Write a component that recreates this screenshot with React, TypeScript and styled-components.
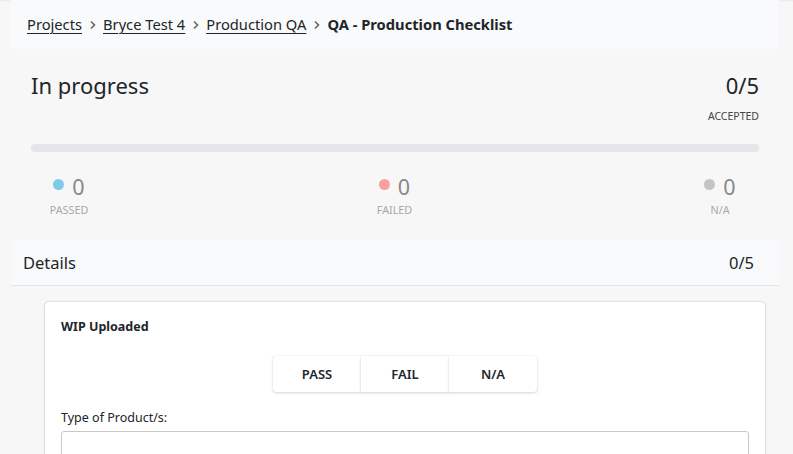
import React from "react";
import styled, { createGlobalStyle } from "styled-components";

const Global = createGlobalStyle`
  html, body { margin: 0; padding: 0; background: #f7f7f7; }
  body { font-family: "Noto Sans", "Open Sans", sans-serif; color: #212529; }
  * { box-sizing: border-box; }
`;

const Page = styled.div`
  width: 793px;
  height: 454px;
  overflow: hidden;
  background: #f7f7f7;
  position: relative;
  box-shadow: inset 0 2px 2px -1px rgba(0,0,0,0.06);
`;

const CrumbBar = styled.nav`
  margin: 0 14px 0 10px;
  height: 49px;
  background: #f9fafb;
  display: flex;
  align-items: center;
  padding: 0 0 1px 17px;
  gap: 6.5px;
  font-size: 14.7px;
`;

const CrumbLink = styled.a`
  color: #212529;
  text-decoration: underline;
  text-underline-offset: 3px;
`;

const CrumbCurrent = styled.span`
  font-weight: 700;
`;

const Chevron = () => (
  <svg width="8" height="10" viewBox="0 0 8 10" style={{ marginTop: 1 }}>
    <path d="M2 1.5 L5.5 5 L2 8.5" fill="none" stroke="#666" strokeWidth="1.6" />
  </svg>
);

const Summary = styled.section`
  padding: 14px 34px 0 31px;
`;

const SummaryTop = styled.div`
  display: flex;
  justify-content: space-between;
  align-items: flex-start;
`;

const Status = styled.h1`
  margin: 0;
  font-size: 22px;
  font-weight: 400;
  line-height: 44px;
`;

const Accepted = styled.div`
  display: flex;
  flex-direction: column;
  align-items: flex-end;
`;

const AcceptedCount = styled.div`
  font-size: 22px;
  line-height: 44px;
`;

const AcceptedLabel = styled.div`
  font-size: 10.5px;
  color: #444;
  line-height: 14px;
  margin-top: 2px;
`;

const Track = styled.div`
  margin-top: 21px;
  height: 8px;
  border-radius: 4px;
  background: #e6e6ea;
  width: 728px;
`;

const Stats = styled.div`
  display: flex;
  justify-content: space-between;
  padding: 22px 17px 0 16px;
  width: 728px;
`;

const Stat = styled.div`
  width: 44px;
  display: flex;
  flex-direction: column;
  align-items: center;
`;

const StatTop = styled.div`
  display: flex;
  align-items: center;
  gap: 8px;
`;

const Dot = styled.span<{ $color: string }>`
  width: 11px;
  height: 11px;
  border-radius: 50%;
  background: ${(p) => p.$color};
  margin-top: -6px;
`;

const StatValue = styled.span`
  font-size: 21.5px;
  color: #888;
  line-height: 26px;
`;

const StatLabel = styled.span`
  font-size: 10.8px;
  color: #a8a8a8;
  line-height: 14px;
  margin-top: 3px;
  white-space: nowrap;
`;

const DetailsHeader = styled.div`
  margin: 23px 14px 0 11px;
  height: 46px;
  background: #f8f9fb;
  border-bottom: 1px solid #e4e4e6;
  display: flex;
  align-items: center;
  justify-content: space-between;
  padding: 0 25px 1px 12px;
  font-size: 16.5px;
`;

const Card = styled.div`
  margin: 16px 28px 0 45px;
  background: #fff;
  border-radius: 4px;
  box-shadow: 0 0 2px rgba(0,0,0,0.28), 0 1px 3px rgba(0,0,0,0.08);
  padding: 15px 16px 0 16px;
  height: 200px;
`;

const CardTitle = styled.div`
  font-weight: 700;
  font-size: 12.5px;
  line-height: 20px;
`;

const ButtonGroup = styled.div`
  display: flex;
  justify-content: center;
  margin-top: 19px;
`;

const Choice = styled.button`
  width: 88px;
  height: 36px;
  border: none;
  background: #fff;
  font-family: inherit;
  font-size: 13px;
  font-weight: 600;
  color: #212529;
  box-shadow: 0 1px 3px rgba(0,0,0,0.16), 0 0 1px rgba(0,0,0,0.12);
  &:first-child { border-radius: 3px 0 0 3px; }
  &:last-child { border-radius: 0 3px 3px 0; }
`;

const FieldLabel = styled.label`
  display: block;
  margin-top: 17px;
  font-size: 12.5px;
  line-height: 18px;
`;

const Input = styled.input`
  display: block;
  margin-top: 4px;
  width: 688px;
  height: 36px;
  border: 1px solid #c8c8c8;
  border-radius: 3px;
  background: #fff;
`;

export default function App() {
  return (
    <Page>
      <Global />
      <CrumbBar>
        <CrumbLink href="#">Projects</CrumbLink>
        <Chevron />
        <CrumbLink href="#">Bryce Test 4</CrumbLink>
        <Chevron />
        <CrumbLink href="#">Production QA</CrumbLink>
        <Chevron />
        <CrumbCurrent>QA - Production Checklist</CrumbCurrent>
      </CrumbBar>
      <Summary>
        <SummaryTop>
          <Status>In progress</Status>
          <Accepted>
            <AcceptedCount>0/5</AcceptedCount>
            <AcceptedLabel>ACCEPTED</AcceptedLabel>
          </Accepted>
        </SummaryTop>
        <Track />
        <Stats>
          <Stat>
            <StatTop><Dot $color="#7ecbe9" /><StatValue>0</StatValue></StatTop>
            <StatLabel>PASSED</StatLabel>
          </Stat>
          <Stat>
            <StatTop><Dot $color="#f8a0a0" /><StatValue>0</StatValue></StatTop>
            <StatLabel>FAILED</StatLabel>
          </Stat>
          <Stat>
            <StatTop><Dot $color="#c4c4c4" /><StatValue>0</StatValue></StatTop>
            <StatLabel>N/A</StatLabel>
          </Stat>
        </Stats>
      </Summary>
      <DetailsHeader>
        <span>Details</span>
        <span>0/5</span>
      </DetailsHeader>
      <Card>
        <CardTitle>WIP Uploaded</CardTitle>
        <ButtonGroup>
          <Choice>PASS</Choice>
          <Choice>FAIL</Choice>
          <Choice>N/A</Choice>
        </ButtonGroup>
        <FieldLabel>Type of Product/s:</FieldLabel>
        <Input />
      </Card>
    </Page>
  );
}
